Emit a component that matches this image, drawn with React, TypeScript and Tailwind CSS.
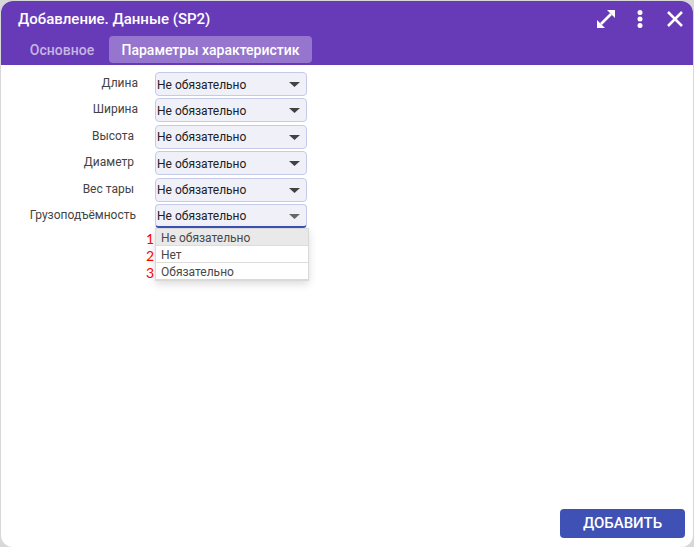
import React from "react";

const OPTIONS = ["Не обязательно", "Нет", "Обязательно"];

const FIELDS = [
  { id: "length", label: "Длина", inset: "pr-[17px]" },
  { id: "width", label: "Ширина", inset: "pr-[17px]" },
  { id: "height", label: "Высота", inset: "pr-[21px]" },
  { id: "diameter", label: "Диаметр", inset: "pr-[21px]" },
  { id: "tare", label: "Вес тары", inset: "pr-[21px]" },
  { id: "capacity", label: "Грузоподъёмность", inset: "pr-[19px]", open: true },
];

function OptionList() {
  return (
    <ul
      role="listbox"
      aria-label="Грузоподъёмность"
      className="absolute top-full left-0 w-[154px] border border-b-2 border-[#d9d9d9] bg-white shadow-[0_3px_8px_rgba(0,0,0,0.14)]"
    >
      {OPTIONS.map((option, i) => (
        <li
          key={option}
          role="option"
          aria-selected={i === 0}
          className="relative h-[17px] border-b border-[#dcdcdc] pl-[5px] text-[12px] leading-[18px] text-[#484848] last:h-4 last:border-b-0 aria-selected:bg-[#e9e9e9]"
        >
          <span className="absolute top-px right-full mr-[2px] font-[Lato,sans-serif] text-[14px] leading-[17px] text-[#f00]">
            {i + 1}
          </span>
          {option}
        </li>
      ))}
    </ul>
  );
}

function Field({ id, label, inset, open }: { id: string; label: string; inset: string; open?: boolean }) {
  return (
    <div className="flex">
      <label htmlFor={id} className={`w-[154px] shrink-0 text-right text-[12px] leading-[22px] text-[#444] ${inset}`}>
        {label}
      </label>
      <div className="relative w-[152px]">
        <select
          id={id}
          defaultValue={OPTIONS[0]}
          className={`block h-6 w-full appearance-none rounded border border-[#c5cae9] bg-[#f0f0f9] pt-px pl-px text-[12px] text-[#212121] outline-none ${
            open ? "border-b-2 border-b-[#3f51b5]" : ""
          }`}
        >
          {OPTIONS.map((option) => (
            <option key={option}>{option}</option>
          ))}
        </select>
        <svg
          viewBox="0 0 10 5"
          className={`pointer-events-none absolute top-[10px] right-[7px] h-[5px] w-[11px] ${open ? "text-[#666]" : "text-[#424242]"}`}
          preserveAspectRatio="none"
          aria-hidden="true"
        >
          <path d="M0 0h10L5 5z" fill="currentColor" />
        </svg>
        {open && <OptionList />}
      </div>
    </div>
  );
}

export default function App() {
  return (
    <div className="flex min-h-screen bg-[#d8d8d8] p-px pb-0 font-[Roboto,'Liberation_Sans',sans-serif]">
      <section className="flex flex-1 flex-col overflow-hidden rounded-xl bg-white">
        <header className="flex h-16 flex-col bg-[#673ab7] text-white">
          <div className="flex h-[35px] items-center justify-between pr-[10px] pl-[17px]">
            <h1 className="text-[15px] leading-5 font-medium">Добавление. Данные (SP2)</h1>
            <div className="flex items-center">
              <button type="button" aria-label="Развернуть">
                <svg viewBox="0 0 20 20" className="size-5" aria-hidden="true">
                  <path d="M5 15L15 5" stroke="currentColor" strokeWidth="2.6" />
                  <path d="M11 1h8v8zM1 11v8h8z" fill="currentColor" />
                </svg>
              </button>
              <button type="button" aria-label="Меню" className="ml-[21px]">
                <svg viewBox="0 0 6 20" className="h-5 w-[6px]" fill="currentColor" aria-hidden="true">
                  <circle cx="3" cy="3.5" r="2.5" />
                  <circle cx="3" cy="10" r="2.5" />
                  <circle cx="3" cy="16.5" r="2.5" />
                </svg>
              </button>
              <button type="button" aria-label="Закрыть" className="ml-6">
                <svg viewBox="0 0 16 16" className="size-4" aria-hidden="true">
                  <path d="M1 1l14 14M15 1L1 15" stroke="currentColor" strokeWidth="2.5" />
                </svg>
              </button>
            </div>
          </div>
          <nav className="flex pl-[17px] text-[14px] leading-[25px] font-medium">
            <button type="button" className="w-[88px] pt-[2px] text-[#c7b5e4]">
              Основное
            </button>
            <button type="button" className="ml-[3px] w-[203px] rounded bg-[#9575cd] pt-[2px]">
              Параметры характеристик
            </button>
          </nav>
        </header>
        <form className="flex flex-1 flex-col justify-between">
          <div className="mt-[7px] flex h-[156px] flex-col justify-between">
            {FIELDS.map((field) => (
              <Field key={field.id} {...field} />
            ))}
          </div>
          <button
            type="submit"
            className="mr-2 mb-[9px] h-[29px] w-[125px] self-end rounded bg-[#3f51b5] text-[15px] font-medium text-white"
          >
            ДОБАВИТЬ
          </button>
        </form>
      </section>
    </div>
  );
}
